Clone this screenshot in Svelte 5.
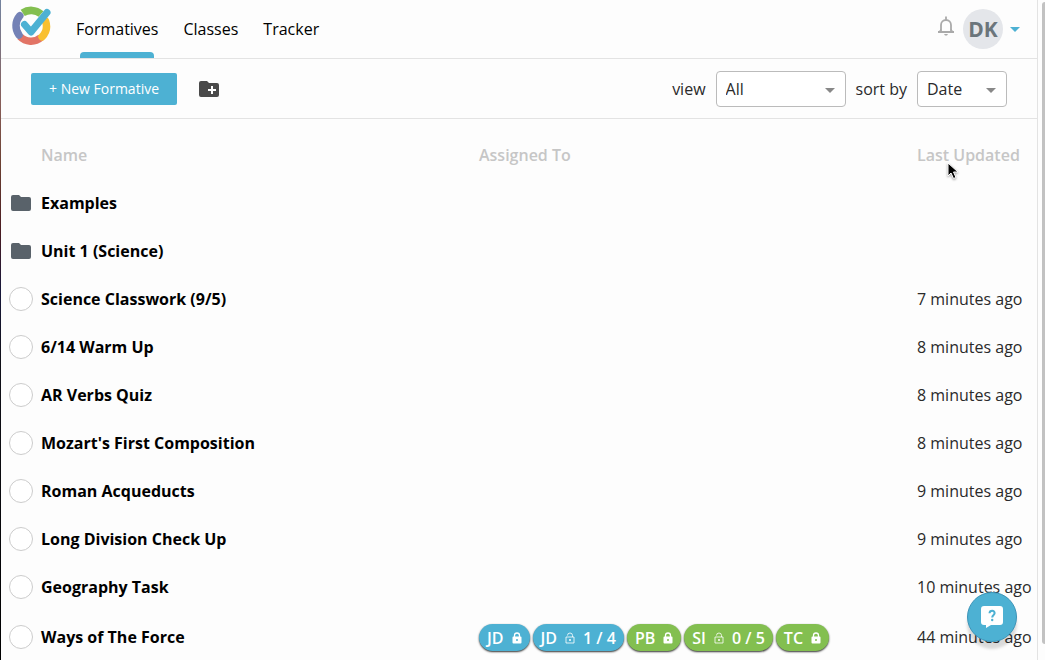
<script lang="ts">
	interface Assignment {
		code: string;
		color: 'blue' | 'green';
		locked: boolean;
		progress?: string;
	}

	interface Item {
		name: string;
		folder?: boolean;
		updated?: string;
		assigned?: Assignment[];
	}

	const tabs = ['Formatives', 'Classes', 'Tracker'];
	let activeTab = $state('Formatives');
	let view = $state('All');
	let sortBy = $state('Date');

	const items: Item[] = [
		{ name: 'Examples', folder: true },
		{ name: 'Unit 1 (Science)', folder: true },
		{ name: 'Science Classwork (9/5)', updated: '7 minutes ago' },
		{ name: '6/14 Warm Up', updated: '8 minutes ago' },
		{ name: 'AR Verbs Quiz', updated: '8 minutes ago' },
		{ name: "Mozart's First Composition", updated: '8 minutes ago' },
		{ name: 'Roman Acqueducts', updated: '9 minutes ago' },
		{ name: 'Long Division Check Up', updated: '9 minutes ago' },
		{ name: 'Geography Task', updated: '10 minutes ago' },
		{
			name: 'Ways of The Force',
			updated: '44 minutes ago',
			assigned: [
				{ code: 'JD', color: 'blue', locked: true },
				{ code: 'JD', color: 'blue', locked: false, progress: '1 / 4' },
				{ code: 'PB', color: 'green', locked: true },
				{ code: 'SI', color: 'green', locked: false, progress: '0 / 5' },
				{ code: 'TC', color: 'green', locked: true }
			]
		}
	];
</script>

<div class="app">
	<div class="edge"></div>
	<div class="page">
		<header class="topbar">
			<a class="logo" href="#home" aria-label="Home">
				<svg viewBox="0 0 40 40" width="40" height="40" fill="none" stroke-width="7.500" stroke-linecap="round">
					<path d="M11.700 6.900A15.300 15.300 0 0 1 30 8" stroke="#83bf50" stroke-linecap="butt" />
					<path d="M30 31.500A15.300 15.300 0 0 1 9 30.500" stroke="#e27466" stroke-linecap="butt" />
					<path d="M8 29A15.300 15.300 0 0 1 8.800 9.800" stroke="#7482b6" />
					<path d="M34.600 15.200A15.300 15.300 0 0 1 31 30.800" stroke="#f9c02f" />
					<path d="M13.500 18.500l6.500 7.500L36 6.500" stroke="#4db1d3" stroke-width="7" stroke-linejoin="round" />
				</svg>
			</a>
			<nav>
				{#each tabs as tab}
					<button class="tab" class:active={activeTab === tab} onclick={() => (activeTab = tab)}>{tab}</button>
				{/each}
			</nav>
			<div class="account">
				<button class="bell" aria-label="Notifications">
					<svg viewBox="0 0 16 20" width="16" height="20" fill="none" stroke="#aaa" stroke-width="1.800">
						<path d="M3 15V9a5 5 0 0 1 10 0v6M0 16h16M8 0.500v3" />
						<path d="M6 18h4l-1 1.500H7z" fill="#aaa" stroke="none" />
						<path d="M3 13l-2 3h14l-2-3" stroke-width="1" />
					</svg>
				</button>
				<button class="user" aria-label="Account menu">
					<span class="avatar">DK</span>
					<span class="caret"></span>
				</button>
			</div>
		</header>

		<div class="toolbar">
			<button class="new">+ New Formative</button>
			<button class="new-folder" aria-label="New folder">
				<svg viewBox="0 0 20 16" width="20" height="16">
					<path d="M2 0h6l2 2h8a2 2 0 0 1 2 2v10a2 2 0 0 1-2 2H2a2 2 0 0 1-2-2V2a2 2 0 0 1 2-2z" fill="#4a4a4a" />
					<path d="M13 5v8M9 9h8" stroke="#fff" stroke-width="2" />
				</svg>
			</button>
			<div class="filters">
				<label for="view">view</label>
				<div class="select view">
					<select id="view" bind:value={view}>
						<option>All</option>
						<option>Assigned</option>
					</select>
				</div>
				<label for="sort">sort by</label>
				<div class="select sort">
					<select id="sort" bind:value={sortBy}>
						<option>Date</option>
						<option>Name</option>
					</select>
				</div>
			</div>
		</div>

		<table>
			<colgroup>
				<col class="col-mark" />
				<col />
				<col />
				<col class="col-updated" />
			</colgroup>
			<thead>
				<tr>
					<td></td>
					<th>Name</th>
					<th>Assigned To</th>
					<th>Last Updated</th>
				</tr>
			</thead>
			<tbody>
				{#each items as item}
					<tr class:has-chips={item.assigned}>
						<td class="mark">
							{#if item.folder}
								<svg viewBox="0 0 20 16" width="20" height="16">
									<path d="M2 0h6l2 2h8a2 2 0 0 1 2 2v10a2 2 0 0 1-2 2H2a2 2 0 0 1-2-2V2a2 2 0 0 1 2-2z" fill="#59626a" />
								</svg>
							{:else}
								<input type="checkbox" aria-label={item.name} />
							{/if}
						</td>
						<td class="name">{item.name}</td>
						<td>
							{#if item.assigned}
								<div class="chips">
									{#each item.assigned as chip}
										<span class="chip {chip.color}">
											{chip.code}
											{#if chip.locked}
												<svg viewBox="0 0 10 12" width="10" height="12">
													<path d="M2.500 5V3.500a2.500 2.500 0 0 1 5 0V5" fill="none" stroke="#fff" stroke-width="1.300" />
													<path fill-rule="evenodd" d="M1.500 4.500h7a1 1 0 0 1 1 1v5a1 1 0 0 1-1 1h-7a1 1 0 0 1-1-1v-5a1 1 0 0 1 1-1zM5 7a1 1 0 1 0 0 2 1 1 0 0 0 0-2z" fill="#fff" />
												</svg>
											{:else}
												<svg viewBox="0 0 10 12" width="10" height="12" fill="none" stroke="#fff" stroke-opacity="0.8">
													<path d="M2.500 3.500a2.500 2.500 0 0 1 5 0V5M1 5h8v6H1z" />
													<circle cx="5" cy="8" r="1" fill="#fff" stroke="none" />
												</svg>
											{/if}
											{#if chip.progress}<span>{chip.progress}</span>{/if}
										</span>
									{/each}
								</div>
							{/if}
						</td>
						<td>{item.updated ?? ''}</td>
					</tr>
				{/each}
			</tbody>
		</table>
	</div>
	<div class="scrollbar"><div class="thumb"></div></div>

	<button class="help" aria-label="Help">
		<svg viewBox="0 0 24 24" width="24" height="24">
			<path d="M4 1h16a3 3 0 0 1 3 3v13a3 3 0 0 1-3 3H11l-5 3v-3H4a3 3 0 0 1-3-3V4a3 3 0 0 1 3-3z" fill="#fff" />
			<path d="M9.500 8.300C9.700 5 15 5 14.600 8.400C14.400 10 12.200 10 12.200 12.600" fill="none" stroke="#4db1d3" stroke-width="2" />
			<circle cx="12.200" cy="15" r="1.200" fill="#4db1d3" />
		</svg>
	</button>

	<svg class="pointer" viewBox="0 0 12 18" width="12" height="18">
		<path d="M1 1v13l3-3 2.500 5.500 2.500-1L6.500 10H11z" fill="#000" stroke="#fff" />
	</svg>
</div>

<style>
	:global(body) {
		background: #fdfdfd;
		overflow: hidden;
	}

	.app {
		position: relative;
		display: flex;
		height: 100vh;
		overflow: hidden;
		font: 16px/24px 'Open Sans', 'Noto Sans', sans-serif;
		color: #2a2a2a;
	}

	.edge {
		flex: 0 0 1px;
		background: linear-gradient(#7484a0, #875d57 16%, #6b4032 25%, #4a1c22 35%, #17173a 44%, #101018 55%, #000);
	}

	.page {
		flex: 1;
		min-width: 0;
		border-right: 1px solid #e3e3e3;
	}

	button,
	select {
		font: inherit;
		color: inherit;
		cursor: pointer;
	}

	button {
		padding: 0;
		border: none;
		background: none;
	}

	svg {
		display: block;
	}

	.topbar {
		display: flex;
		height: 58px;
		border-bottom: 1px solid #e3e3e3;
	}

	.logo {
		padding: 6px 10px;
	}

	nav {
		display: flex;
		gap: 25px;
		margin-left: 15px;
	}

	.tab {
		position: relative;
		color: #000;
	}

	.tab.active::after {
		content: '';
		position: absolute;
		left: 4px;
		right: 4px;
		bottom: 0;
		height: 6px;
		border-radius: 4px 4px 0 0;
		background: #4db1d3;
	}

	.account {
		display: flex;
		align-items: center;
		gap: 9px;
		margin-left: auto;
		padding-right: 17px;
	}

	.bell {
		padding-bottom: 6px;
	}

	.user {
		display: flex;
		align-items: center;
		gap: 7px;
	}

	.avatar {
		width: 40px;
		height: 40px;
		border-radius: 50%;
		background: #e4e6ea;
		color: #6b757b;
		font-size: 21px;
		font-weight: 700;
		line-height: 40px;
	}

	.caret {
		border: 5px solid transparent;
		border-top-color: #4db1d3;
		border-bottom: none;
	}

	.toolbar {
		display: flex;
		align-items: center;
		height: 59px;
		padding: 0 30px;
		border-bottom: 1px solid #e3e3e3;
	}

	.new {
		height: 32px;
		padding: 0 18px;
		border-radius: 2px;
		background: #4db1d3;
		color: #fff;
		font-size: 14px;
	}

	.new-folder {
		margin-left: 22px;
	}

	.filters {
		display: flex;
		align-items: center;
		gap: 10px;
		margin-left: auto;
	}

	.select {
		position: relative;
	}

	.select::after {
		content: '';
		position: absolute;
		top: 17px;
		right: 11px;
		border: 5px solid transparent;
		border-top-color: #888;
		border-bottom: none;
		pointer-events: none;
	}

	select {
		display: block;
		width: 100%;
		height: 36px;
		padding: 0 9px;
		border: 1px solid #bbb;
		border-radius: 4px;
		background: #fff;
		appearance: none;
	}

	.view {
		width: 130px;
	}

	.sort {
		width: 90px;
	}

	table {
		width: 100%;
		margin-top: 12px;
		border-collapse: collapse;
		table-layout: fixed;
	}

	.col-mark {
		width: 40px;
	}

	.col-updated {
		width: 120px;
	}

	tr {
		height: 48px;
	}

	.has-chips {
		height: 52px;
	}

	th,
	td {
		padding: 0;
		text-align: left;
		vertical-align: middle;
		white-space: nowrap;
	}

	th {
		color: #c6c6c6;
		font-weight: 600;
	}

	.mark svg {
		margin-left: 10px;
	}

	.mark input {
		display: block;
		width: 24px;
		height: 24px;
		margin: 0 0 0 8px;
		border: 1px solid #ccc;
		border-radius: 50%;
		background: #fff;
		appearance: none;
	}

	.mark input:checked {
		background: #4db1d3;
	}

	.name {
		color: #000;
		font-weight: 700;
	}

	.chips {
		display: flex;
		gap: 3px;
		padding-top: 1px;
	}

	.chip {
		display: flex;
		align-items: center;
		gap: 8px;
		height: 27px;
		padding: 0 8px;
		border-radius: 14px;
		box-shadow: 0 1px 2px rgba(0, 0, 0, 0.8);
		color: #fff;
		font-weight: 600;
	}

	.blue {
		background: #4db1d3;
	}

	.green {
		background: #83bf50;
	}

	.scrollbar {
		flex: 0 0 3px;
		padding: 2px 0 16px 4px;
	}

	.thumb {
		height: 100%;
		border-radius: 4px 0 0 4px;
		background: #c2c2c2;
	}

	.help {
		position: absolute;
		right: 28px;
		bottom: 18px;
		display: grid;
		place-items: center;
		width: 50px;
		height: 50px;
		border: 1px solid #3c94b8;
		border-radius: 50%;
		background: #4db1d3;
		box-shadow: 0 7px 3px rgba(0, 0, 0, 0.14);
	}

	.pointer {
		position: absolute;
		top: 162px;
		right: 86px;
		filter: drop-shadow(0 1px 1px rgba(0, 0, 0, 0.4));
	}
</style>
